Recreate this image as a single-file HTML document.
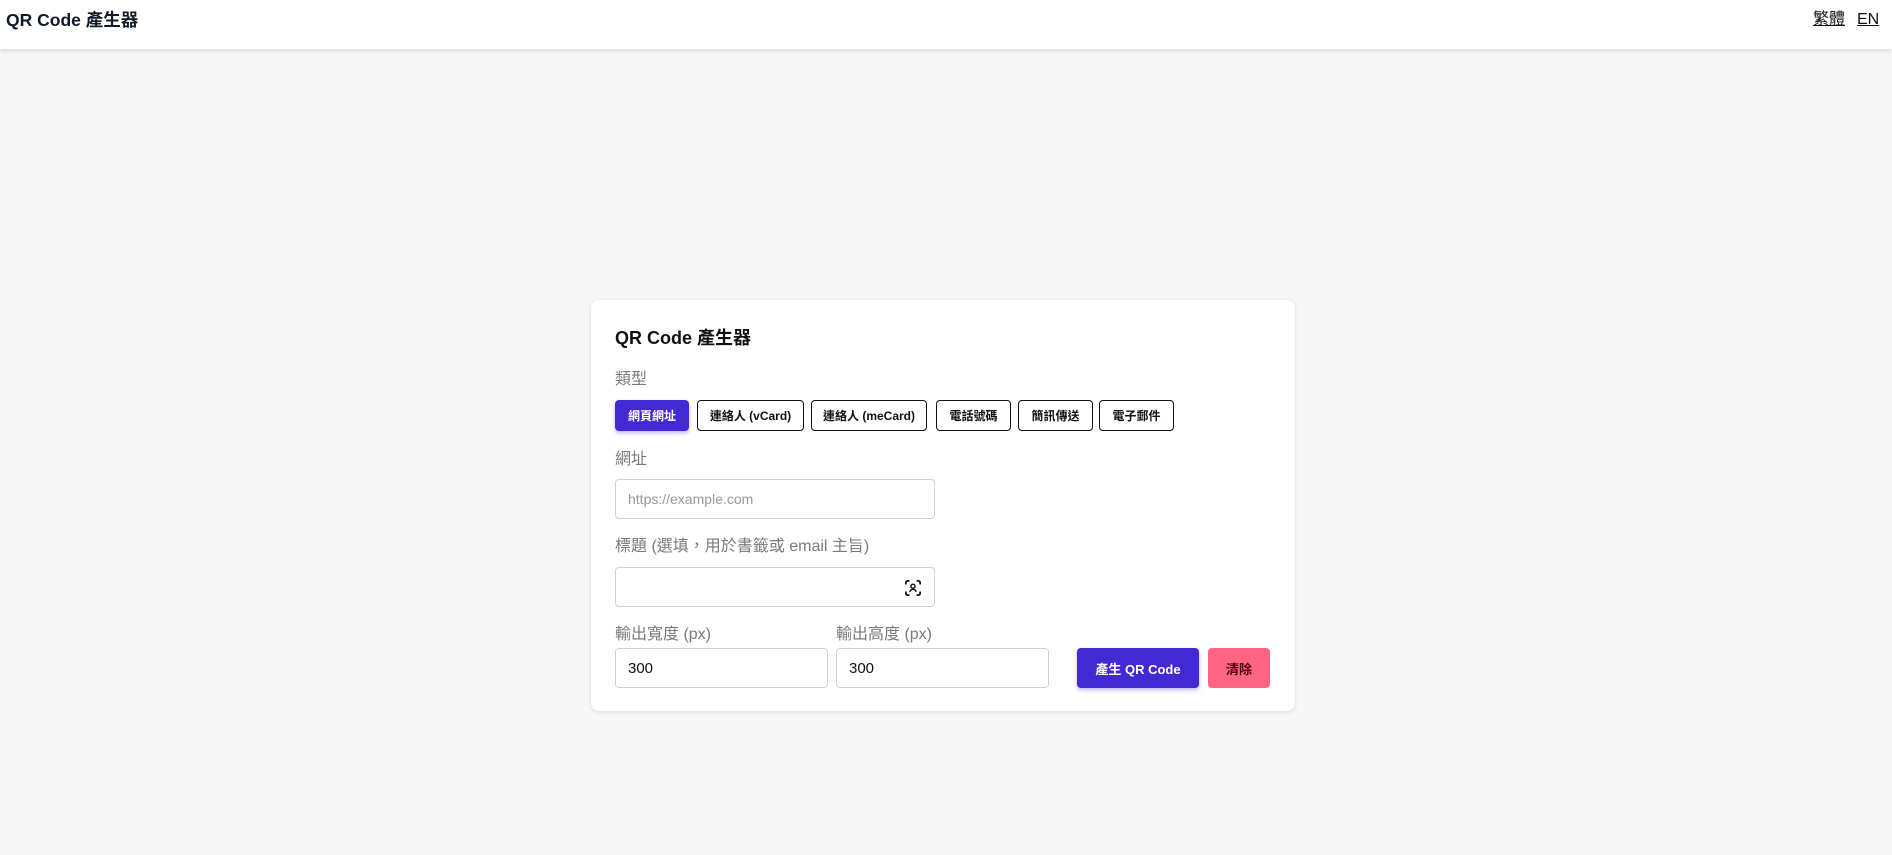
<!DOCTYPE html>
<html><head><meta charset="utf-8"><style>
*{box-sizing:border-box;margin:0;padding:0}
body{width:1892px;height:855px;background:#f7f7f7;font-family:"Liberation Sans","Noto Sans CJK TC",sans-serif;position:relative;overflow:hidden;color:#111}
.hdr{position:absolute;left:0;top:0;width:1892px;height:49px;background:#fff;box-shadow:0 2px 5px rgba(0,0,0,.12)}
.hdr .t{position:absolute;left:6px;top:9px;font-size:17.5px;font-weight:bold;line-height:22px;color:#111827}
.lang{position:absolute;top:10px;font-size:16px;line-height:20px;text-decoration:underline;color:#111}
.card{position:absolute;left:591px;top:300px;width:704px;height:411px;background:#fff;border-radius:8px;box-shadow:0 1px 4px rgba(0,0,0,.12)}
.a{position:absolute}
.lbl{font-size:16px;color:#7a7a7a;line-height:20px}
.btn{position:absolute;top:400px;height:31px;border:1px solid #111;border-radius:4px;background:#fff;font-size:12px;font-weight:bold;display:flex;align-items:center;justify-content:center}
.inp{position:absolute;border:1px solid #d0d0d0;border-radius:4px;background:#fff;font-size:15px;display:flex;align-items:center;padding-left:12px}
</style></head><body>
<div class="hdr"><div class="t">QR Code 產生器</div>
<div class="lang" style="left:1813px">繁體</div><div class="lang" style="left:1857px">EN</div></div>
<div class="card"></div>
<div class="a" style="left:615px;top:327px;font-size:18px;font-weight:bold;line-height:22px">QR Code 產生器</div>
<div class="a lbl" style="left:615px;top:370px">類型</div>
<div class="btn" style="left:615px;width:74px;background:#4329d4;border-color:#4329d4;color:#fff;box-shadow:0 2px 4px rgba(67,41,212,.35)">網頁網址</div>
<div class="btn" style="left:697px;width:107px">連絡人 (vCard)</div>
<div class="btn" style="left:811px;width:116px">連絡人 (meCard)</div>
<div class="btn" style="left:936px;width:75px">電話號碼</div>
<div class="btn" style="left:1018px;width:75px">簡訊傳送</div>
<div class="btn" style="left:1099px;width:75px">電子郵件</div>
<div class="a lbl" style="left:615px;top:450px">網址</div>
<div class="inp" style="left:615px;top:479px;width:320px;height:40px;color:#999;font-size:14px">https://example.com</div>
<div class="a lbl" style="left:615px;top:537px">標題 (選填，用於書籤或 email 主旨)</div>
<div class="inp" style="left:615px;top:567px;width:320px;height:40px"></div>
<svg class="a" style="left:905px;top:580px" width="16" height="16" viewBox="0 0 18 18" fill="none" stroke="#111" stroke-width="2"><path d="M1 5V3a2 2 0 0 1 2-2h2M13 1h2a2 2 0 0 1 2 2v2M17 13v2a2 2 0 0 1-2 2h-2M5 17H3a2 2 0 0 1-2-2v-2"/><circle cx="9" cy="7" r="2.3" stroke-width="1.6"/><path d="M5.5 13.5c.5-2 2-3 3.5-3s3 1 3.5 3" stroke-width="1.6"/></svg>
<div class="a lbl" style="left:615px;top:625px">輸出寬度 (px)</div>
<div class="a lbl" style="left:836px;top:625px">輸出高度 (px)</div>
<div class="inp" style="left:615px;top:648px;width:213px;height:40px">300</div>
<div class="inp" style="left:836px;top:648px;width:213px;height:40px">300</div>
<div class="a" style="left:1077px;top:648px;width:122px;height:40px;background:#4329d4;border-radius:4px;color:#fff;font-size:13px;font-weight:bold;display:flex;align-items:center;justify-content:center;box-shadow:0 2px 4px rgba(67,41,212,.35)">產生 QR Code</div>
<div class="a" style="left:1208px;top:648px;width:62px;height:40px;background:#ff6480;border-radius:4px;color:#4a0010;font-size:13px;font-weight:bold;display:flex;align-items:center;justify-content:center">清除</div>
</body></html>
